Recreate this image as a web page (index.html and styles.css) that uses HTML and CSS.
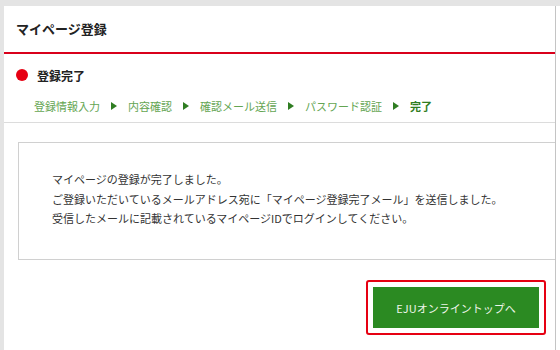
FILE: index.html
```html
<!DOCTYPE html>
<html lang="ja">

<head>
    <meta charset="UTF-8">
    <meta name="viewport" content="width=device-width, initial-scale=1.0">
    <title>マイページ登録</title>
    <link rel="stylesheet" href="styles.css">
</head>

<body>
    <div class="frame">
        <div class="page">
            <h1 class="page-title">マイページ登録</h1>

            <div class="status">
                <span class="dot"></span>
                <h2 class="status-title">登録完了</h2>
            </div>

            <ol class="steps">
                <li>登録情報入力</li>
                <li class="arrow"></li>
                <li>内容確認</li>
                <li class="arrow"></li>
                <li>確認メール送信</li>
                <li class="arrow"></li>
                <li>パスワード認証</li>
                <li class="arrow"></li>
                <li class="current">完了</li>
            </ol>

            <div class="message">
                <p>マイページの登録が完了しました。</p>
                <p>ご登録いただいているメールアドレス宛に「マイページ登録完了メール」を送信しました。</p>
                <p>受信したメールに記載されているマイページIDでログインしてください。</p>
            </div>

            <div class="actions">
                <div class="highlight">
                    <a href="#" class="btn-top">EJUオンライントップへ</a>
                </div>
            </div>
        </div>
    </div>
</body>

</html>
```

FILE: styles.css
```css
* {
    margin: 0;
    padding: 0;
    box-sizing: border-box;
}

body {
    background-color: #fff;
    font-family: "Noto Sans CJK JP", "Noto Sans", sans-serif;
    color: #333;
}

.frame {
    height: 350px;
    border-top: 6px solid #e4e4e4;
    border-left: 4px solid #e4e4e4;
}

.page {
    width: 552px;
    height: 100%;
    background-color: #fff;
    border-right: 1px solid #c4c4c4;
}

.page-title {
    height: 48px;
    padding-left: 12px;
    line-height: 46px;
    font-size: 13px;
    font-weight: bold;
    color: #222;
    border-bottom: 2px solid #d9001b;
}

.status {
    display: flex;
    align-items: center;
    gap: 9px;
    height: 14px;
    margin-top: 14px;
    padding-left: 12px;
}

.dot {
    width: 12px;
    height: 12px;
    border-radius: 50%;
    background-color: #e60012;
}

.status-title {
    font-size: 12px;
    font-weight: bold;
    color: #222;
}

.steps {
    display: flex;
    align-items: center;
    gap: 10px;
    margin-top: 16px;
    padding: 0 0 8px 30px;
    list-style: none;
    font-size: 11px;
    line-height: 16px;
    color: #64a552;
    border-bottom: 1px solid #dcdcdc;
}

.steps .arrow {
    width: 0;
    height: 0;
    margin: 0 1px;
    border-top: 4px solid transparent;
    border-bottom: 4px solid transparent;
    border-left: 6px solid #2f7d22;
}

.steps .current {
    font-weight: bold;
    color: #2f7d22;
}

.message {
    height: 118px;
    margin: 19px 0 0 14px;
    padding: 27px 0 0 33px;
    border: 1px solid #d0d0d0;
    border-right: none;
    font-size: 11px;
    line-height: 19.5px;
    color: #333;
}

.actions {
    display: flex;
    justify-content: flex-end;
    margin-top: 20px;
    padding-right: 9px;
}

.highlight {
    padding: 5px;
    border: 2px solid #e60012;
    border-radius: 3px;
}

.btn-top {
    display: flex;
    align-items: center;
    justify-content: center;
    width: 166px;
    height: 41px;
    background-color: #2b8a22;
    color: #eef5ea;
    font-size: 11px;
    text-decoration: none;
}
```
